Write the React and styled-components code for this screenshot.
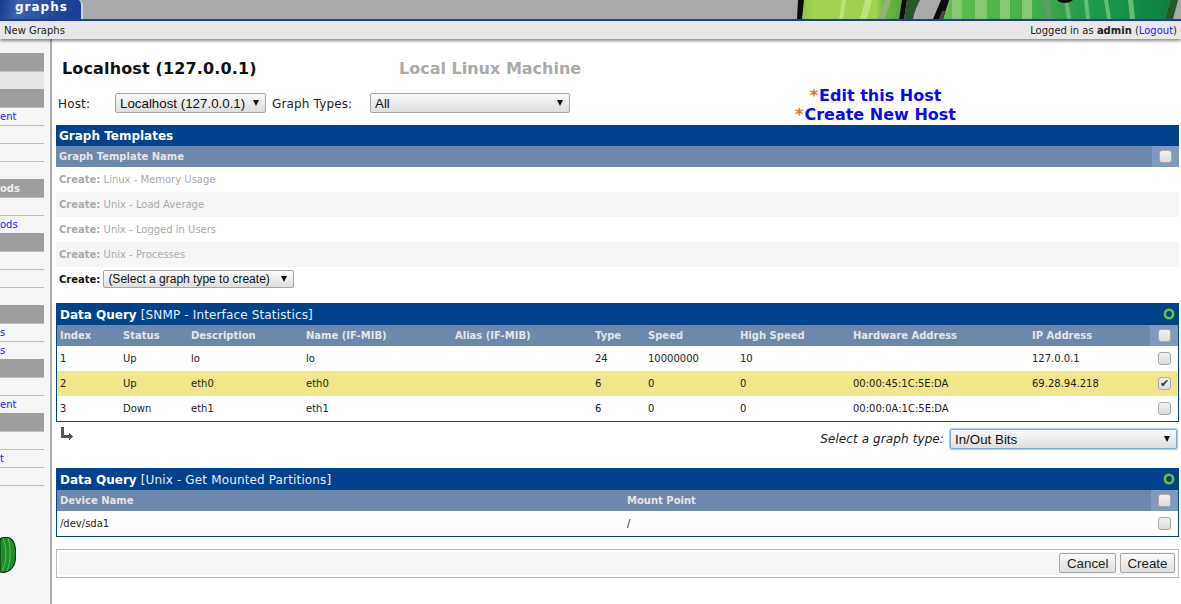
import React from "react";
import styled, { createGlobalStyle } from "styled-components";

const GlobalStyle = createGlobalStyle`
  html, body {
    margin: 0;
    padding: 0;
    height: 100%;
    overflow: hidden;
    background: #fff;
    font-family: "DejaVu Sans", Verdana, sans-serif;
    font-size: 10px;
    color: #222;
  }
`;

// the sidebar is scrolled sideways in the shot, only the tail of some labels shows
const menu = [
  { items: [{ active: true }] },
  { items: [{ label: "ent" }, {}, {}, {}] },
  { title: "ods", items: [{}, { label: "ods" }] },
  { items: [{}, {}, {}] },
  { items: [{ label: "s" }, { label: "s" }] },
  { items: [{}, { label: "ent" }] },
  { items: [{}, { label: "t" }, {}] },
];

const templates = [
  "Linux - Memory Usage",
  "Unix - Load Average",
  "Unix - Logged in Users",
  "Unix - Processes",
];

const interfaceCols = [
  ["Index", 63],
  ["Status", 68],
  ["Description", 115],
  ["Name (IF-MIB)", 149],
  ["Alias (IF-MIB)", 140],
  ["Type", 53],
  ["Speed", 92],
  ["High Speed", 113],
  ["Hardware Address", 179],
  ["IP Address", 121],
];

const interfaceRows = [
  ["1", "Up", "lo", "lo", "", "24", "10000000", "10", "", "127.0.0.1"],
  ["2", "Up", "eth0", "eth0", "", "6", "0", "0", "00:00:45:1C:5E:DA", "69.28.94.218"],
  ["3", "Down", "eth1", "eth1", "", "6", "0", "0", "00:00:0A:1C:5E:DA", ""],
];

const mountCols = [
  ["Device Name", 567],
  ["Mount Point", 527],
];

const Melons = () => (
  <MelonArt viewBox="0 0 386 19" aria-hidden="true">
    <defs>
      <linearGradient id="lime" x1="0" x2="1" y1="0" y2="0">
        <stop offset="0" stopColor="#8fbf4a" />
        <stop offset="0.14" stopColor="#a4d450" />
        <stop offset="0.74" stopColor="#9fd04e" />
        <stop offset="0.82" stopColor="#6fb544" />
        <stop offset="1" stopColor="#56a83f" />
      </linearGradient>
      <linearGradient id="leaf" x1="0" x2="1" y1="0" y2="0">
        <stop offset="0" stopColor="#62c04c" />
        <stop offset="0.38" stopColor="#47ae4b" />
        <stop offset="0.66" stopColor="#1f9a4c" />
        <stop offset="1" stopColor="#0b7f41" />
      </linearGradient>
    </defs>
    <path d="M5 19 L8 0 H108 L104 19 Z" fill="url(#lime)" />
    <path d="M44 19 L47 0 H51 L48 19 Z M65 19 L70 0 H77 L72 19 Z" fill="#bfe07c" />
    <path d="M83 19 L90 0 H96 L90 19 Z" fill="#8fb46f" />
    <path d="M2 19 L3 0 H9 L7 19 Z" fill="#0b0b0b" />
    <path d="M104 19 L107 0 H112 L109 19 Z" fill="#0b0b0b" />
    <path d="M109 19 L112 0 H125 C122 6 119 12 118 19 Z" fill="#25592a" />
    <path d="M148 19 L153 0 H375 L370 19 Z" fill="url(#leaf)" />
    <path d="M138 19 L146 0 H154 L148 19 Z" fill="#0b0b0b" />
    <path d="M144 19 L147 11 L150 11 L148 19 Z" fill="#4a4a4a" />
    <path d="M157 19 L157 0 H167 L167 19 Z M180 19 L180 0 H192 L192 19 Z M205 19 L205 0 H215 L215 19 Z M227 19 L227 0 H237 L237 19 Z" fill="#86c972" />
    <path d="M248 0 H255 L257 19 H251 Z" fill="#5d9c62" />
    <path d="M269 0 H273 L276 19 H272 Z M289 0 H293 L295 19 H291 Z M309 0 H313 L316 19 H312 Z M333 0 H338 L340 19 H335 Z" fill="#67bd72" />
    <path d="M370 19 L375 0 H383 L378 19 Z" fill="#25592a" />
    <path d="M262 0 C265 4 274 4 278 0 Z" fill="#0b0b0b" />
  </MelonArt>
);

const SmallMelon = () => (
  <svg width="16" height="36" viewBox="0 0 16 36" aria-hidden="true">
    <path d="M0 2 C5 -1 11 0 13.5 5 C16.5 11 16.5 23 13.5 29 C10 35 4 36 0 35 Z" fill="#1c8f2a" stroke="#10330f" strokeWidth="1.2" />
    <path d="M3 1 C7 10 7 26 2 34 M8 1 C11 10 11 26 7 34" fill="none" stroke="#63c35a" strokeWidth="0.9" />
  </svg>
);

const LoadRing = () => (
  <svg width="12" height="12" viewBox="0 0 12 12" aria-hidden="true">
    <circle cx="6" cy="6" r="4.2" fill="none" stroke="#6cbf2f" strokeWidth="2.6" />
  </svg>
);

const ReturnArrow = () => (
  <svg width="14" height="14" viewBox="0 0 14 14" aria-hidden="true">
    <path d="M1 0 H4 V8 H9 V6 H10 V7 H11 V8 H12 V9 H13 V10 H12 V11 H11 V12 H10 V13 H9 V11 H1 Z" fill="#555" />
  </svg>
);

const Select = ({ width, height, small, focused, children }) => (
  <SelectBox $width={width} $height={height}>
    <NativeSelect $focused={focused} $small={small} defaultValue={children}>
      <option>{children}</option>
    </NativeSelect>
  </SelectBox>
);

const QueryPanel = ({ name, columns, rows, highlight, checked }) => (
  <Panel>
    <PanelTitle>
      <PanelName>
        <b>Data Query</b> [{name}]
      </PanelName>
      <LoadRing />
    </PanelTitle>
    <QueryTable>
      <colgroup>
        {columns.map(([label, width]) => (
          <col key={label} width={width} />
        ))}
        <col />
      </colgroup>
      <thead>
        <tr>
          {columns.map(([label]) => (
            <HeadCell key={label}>{label}</HeadCell>
          ))}
          <CheckHead>
            <Check />
          </CheckHead>
        </tr>
      </thead>
      <tbody>
        {rows.map((row, i) => (
          <QueryRow key={i} $selected={i === highlight}>
            {row.map((cell, j) => (
              <Cell key={j}>{cell}</Cell>
            ))}
            <CheckCell>
              <Check defaultChecked={i === checked} />
            </CheckCell>
          </QueryRow>
        ))}
      </tbody>
    </QueryTable>
  </Panel>
);

export default function App() {
  return (
    <Page>
      <GlobalStyle />
      <TopBar>
        <Tab>graphs</Tab>
        <Melons />
      </TopBar>
      <Breadcrumb>
        <span>New Graphs</span>
        <span>
          Logged in as <b>admin</b> (<MenuLink href="#">Logout</MenuLink>)
        </span>
      </Breadcrumb>
      <Body>
        <Sidebar>
          <SidebarScroll>
            {menu.map((group, g) => (
              <React.Fragment key={g}>
                <MenuHead>{group.title}</MenuHead>
                {group.items.map((item, i) => (
                  <MenuItem key={i} $first={i === 0} $active={item.active}>
                    {item.label && <MenuLink href="#">{item.label}</MenuLink>}
                  </MenuItem>
                ))}
              </React.Fragment>
            ))}
          </SidebarScroll>
          <MelonSlot>
            <SmallMelon />
          </MelonSlot>
        </Sidebar>
        <Main>
          <TitleRow>
            <HostName>Localhost (127.0.0.1)</HostName>
            <HostDesc>Local Linux Machine</HostDesc>
          </TitleRow>
          <FilterRow>
            <FilterLabel $width={57}>Host:</FilterLabel>
            <Select width={151}>Localhost (127.0.0.1)</Select>
            <FilterLabel $width={98} $left={6}>Graph Types:</FilterLabel>
            <Select width={200}>All</Select>
            <HostLinks>
              <HostLink>
                <Star>*</Star>
                <BigLink href="#">Edit this Host</BigLink>
              </HostLink>
              <HostLink>
                <Star>*</Star>
                <BigLink href="#">Create New Host</BigLink>
              </HostLink>
            </HostLinks>
          </FilterRow>

          <TemplatesPanel>
            <TemplatesTitle>Graph Templates</TemplatesTitle>
            <TemplatesHead>
              <span>Graph Template Name</span>
              <TemplatesCheck>
                <Check />
              </TemplatesCheck>
            </TemplatesHead>
            {templates.map((name, i) => (
              <TemplateRow key={name} $alt={i % 2 === 1}>
                <b>Create:</b> {name}
              </TemplateRow>
            ))}
            <CreateRow>
              <b>Create:</b>
              <Select width={191} height={18} small>(Select a graph type to create)</Select>
            </CreateRow>
          </TemplatesPanel>

          <QueryPanel
            name="SNMP - Interface Statistics"
            columns={interfaceCols}
            rows={interfaceRows}
            highlight={1}
            checked={1}
          />
          <GraphTypeRow>
            <ReturnArrow />
            <GraphTypePick>
              <GraphTypeLabel>Select a graph type:</GraphTypeLabel>
              <Select width={227} focused>In/Out Bits</Select>
            </GraphTypePick>
          </GraphTypeRow>

          <QueryPanel
            name="Unix - Get Mounted Partitions"
            columns={mountCols}
            rows={[["/dev/sda1", "/"]]}
          />

          <ActionBar>
            <ActionInner>
              <ActionButton>Cancel</ActionButton>
              <ActionButton>Create</ActionButton>
            </ActionInner>
          </ActionBar>
        </Main>
      </Body>
    </Page>
  );
}

const Page = styled.div`
  display: flex;
  flex-direction: column;
  width: 1181px;
  height: 604px;
  overflow: hidden;
`;

const TopBar = styled.div`
  display: flex;
  justify-content: space-between;
  height: 19px;
  flex: none;
  background: #a9a9a9;
`;

const Tab = styled.div`
  width: 83px;
  box-sizing: border-box;
  padding-left: 15px;
  line-height: 14px;
  color: #fff;
  font-size: 12px;
  font-weight: 700;
  letter-spacing: 1px;
  background: linear-gradient(100deg, #16398c 0%, #3c62b0 22%, #1d4596 75%, #1a3f94 100%);
  border-right: 2px solid #c8d4ea;
  box-shadow: inset -1px 0 0 #1a3f94;
  border-top-right-radius: 5px;
`;

const MelonArt = styled.svg`
  width: 386px;
  height: 19px;
  flex: none;
`;

const Breadcrumb = styled.div`
  position: relative;
  z-index: 1;
  flex: none;
  display: flex;
  justify-content: space-between;
  align-items: center;
  height: 18px;
  padding: 0 4px;
  border-top: 2px solid #1a3f94;
  background: #e8e8e8;
  box-shadow: 0 2px 3px rgba(0, 0, 0, 0.45);
`;

const Body = styled.div`
  flex: 1;
  display: flex;
  min-height: 0;
`;

const Sidebar = styled.nav`
  flex: none;
  width: 50px;
  background: #f5f5f5;
  border-right: 2px solid #ababab;
  overflow: hidden;
`;

const SidebarScroll = styled.div`
  box-sizing: border-box;
  width: 44px;
  height: 447px;
  padding-top: 14px;
  border-bottom: 1px solid #bfbfbf;
`;

const MenuHead = styled.div`
  box-sizing: border-box;
  height: 19px;
  line-height: 19px;
  background: #9e9e9e;
  border-bottom: 1px solid #bdbdbd;
  color: #eee;
  font-weight: 700;
  overflow: hidden;
`;

const MenuItem = styled.div`
  box-sizing: border-box;
  height: ${(p) => (p.$first ? 17 : 18)}px;
  line-height: 17px;
  background: ${(p) => (p.$active ? "#e5e5e5" : "transparent")};
  border-top: ${(p) => (p.$first ? "none" : "1px solid #bfbfbf")};
  overflow: hidden;
`;

const MenuLink = styled.a`
  color: #1a1aff;
  text-decoration: none;
`;

const MelonSlot = styled.div`
  margin-top: 51px;
`;

const Main = styled.main`
  flex: 1;
  min-width: 0;
  padding: 0 2px 0 4px;
`;

const TitleRow = styled.div`
  display: flex;
  align-items: center;
  height: 40px;
  margin-top: 9px;
  padding-left: 6px;
  font-size: 16px;
  font-weight: 700;
`;

const HostName = styled.div`
  width: 337px;
  color: #111;
  letter-spacing: 0.14px;
`;

const HostDesc = styled.div`
  color: #aaa;
`;

const FilterRow = styled.div`
  display: flex;
  align-items: center;
  height: 20px;
  margin: 5px 0 0 2px;
  font-size: 12px;
`;

const FilterLabel = styled.label`
  width: ${(p) => p.$width}px;
  margin-left: ${(p) => p.$left || 0}px;
  padding-top: 1px;
  letter-spacing: 0.15px;
`;

const SelectBox = styled.div`
  position: relative;
  flex: none;
  width: ${(p) => p.$width}px;
  height: ${(p) => p.$height || 20}px;
  &::after {
    content: "";
    position: absolute;
    right: 7px;
    top: ${(p) => (p.$height ? 6 : 7)}px;
    border-left: 3px solid transparent;
    border-right: 3px solid transparent;
    border-top: 6px solid #111;
    pointer-events: none;
  }
`;

const NativeSelect = styled.select`
  appearance: none;
  display: block;
  width: 100%;
  height: 100%;
  box-sizing: border-box;
  margin: 0;
  padding: 0 0 0 4px;
  font-family: "Liberation Sans", Arial, sans-serif;
  font-size: ${(p) => (p.$small ? 12 : 13.33)}px;
  color: #111;
  border: 1px solid ${(p) => (p.$focused ? "#7ea7e0" : "#a6a6a6")};
  border-radius: 2px;
  box-shadow: ${(p) => (p.$focused ? "0 0 1px 1px #a8c6f2" : "none")};
  background: linear-gradient(#fafafa, #dedede);
  outline: none;
`;

const HostLinks = styled.div`
  flex: none;
  width: 491px;
  margin: 4px 0 0 60px;
`;

const HostLink = styled.div`
  height: 19px;
  line-height: 19px;
  font-size: 16px;
  font-weight: 700;
  text-align: center;
  white-space: nowrap;
`;

const Star = styled.span`
  margin-right: 1px;
  color: #c47a2c;
`;

const BigLink = styled.a`
  color: #0a0aee;
  text-decoration: none;
`;

const TemplatesPanel = styled.section`
  margin-top: 12px;
`;

const TemplatesTitle = styled.div`
  height: 21px;
  line-height: 22px;
  padding-left: 3px;
  background: #00438c;
  color: #fff;
  font-size: 12px;
  font-weight: 700;
`;

const TemplatesHead = styled.div`
  display: flex;
  justify-content: space-between;
  height: 21px;
  line-height: 21px;
  padding-left: 3px;
  background: #6d88ad;
  color: #e5e5e5;
  font-weight: 700;
`;

const TemplatesCheck = styled.div`
  display: flex;
  align-items: center;
  justify-content: center;
  width: 27px;
  background: #8099bf;
`;

const TemplateRow = styled.div`
  height: 25px;
  line-height: 25px;
  padding-left: 3px;
  background: ${(p) => (p.$alt ? "#f5f5f5" : "#fff")};
  color: #aaa;
`;

const CreateRow = styled.div`
  display: flex;
  align-items: center;
  gap: 3px;
  height: 24px;
  padding-left: 3px;
  color: #111;
`;

const Panel = styled.section`
  margin-top: 12px;
  border: solid #00438c;
  border-width: 0 1px 1px 1px;
`;

const PanelTitle = styled.div`
  display: flex;
  justify-content: space-between;
  align-items: center;
  height: 22px;
  padding: 0 4px;
  margin: 0 -1px;
  background: #00438c;
  font-size: 12px;
`;

const PanelName = styled.span`
  padding-top: 2px;
  color: #e8eef7;
  letter-spacing: 0.15px;
  & b {
    color: #fff;
    letter-spacing: 0;
  }
`;

const QueryTable = styled.table`
  width: 100%;
  table-layout: fixed;
  border-collapse: collapse;
`;

const HeadCell = styled.th`
  height: 21px;
  padding: 0 0 0 3px;
  background: #6d88ad;
  color: #e5e5e5;
  font-size: 10px;
  font-weight: 700;
  text-align: left;
  white-space: nowrap;
`;

const CheckHead = styled.th`
  padding: 0;
  background: #8099bf;
  text-align: center;
`;

const QueryRow = styled.tr`
  background: ${(p) => (p.$selected ? "#f0e68c" : "#fff")};
`;

const Cell = styled.td`
  height: 25px;
  padding: 0 0 0 3px;
  font-size: 10px;
  color: #222;
  white-space: nowrap;
`;

const CheckCell = styled.td`
  padding: 0;
  text-align: center;
`;

const Check = styled.input.attrs({ type: "checkbox" })`
  appearance: none;
  display: block;
  position: relative;
  width: 13px;
  height: 13px;
  margin: 0 auto;
  border: 1px solid #aaa;
  border-radius: 3px;
  background: linear-gradient(#f2f2f2, #dcdcdc);
  &:checked::after {
    content: "✔";
    position: absolute;
    left: 1px;
    top: -1px;
    font-size: 11px;
    line-height: 13px;
    color: #333;
  }
`;

const GraphTypeRow = styled.div`
  display: flex;
  justify-content: space-between;
  align-items: flex-start;
  height: 29px;
  padding: 5px 2px 0 4px;
`;

const GraphTypePick = styled.div`
  display: flex;
  align-items: center;
  gap: 6px;
  margin-top: 2px;
`;

const GraphTypeLabel = styled.em`
  font-size: 12px;
  letter-spacing: 0.1px;
`;

const ActionBar = styled.div`
  margin-top: 12px;
  border: 1px solid #bbb;
  padding: 2px;
`;

const ActionInner = styled.div`
  display: flex;
  justify-content: flex-end;
  gap: 4px;
  height: 23px;
  padding-right: 1px;
  background: #f5f5f5;
`;

const ActionButton = styled.button`
  height: 20px;
  padding: 0 6.5px;
  margin-top: 1px;
  font-family: "Liberation Sans", Arial, sans-serif;
  font-size: 13.33px;
  color: #222;
  border: 1px solid #a6a6a6;
  border-radius: 2px;
  background: linear-gradient(#fafafa, #dedede);
`;
